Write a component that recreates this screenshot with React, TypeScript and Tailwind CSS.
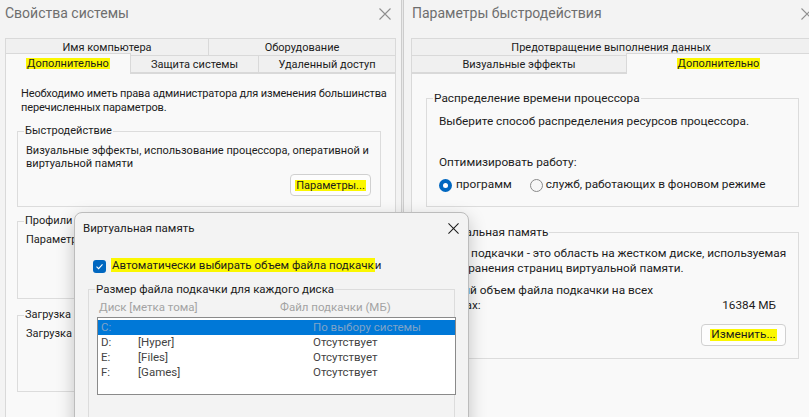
import React from "react";

// Three overlapping Windows dialogs: System Properties, Performance Options, Virtual Memory

type Kids = { children?: React.ReactNode; className?: string };

function CloseX({ className = "" }: { className?: string }) {
  return (
    <svg width="12" height="12" viewBox="0 0 12 12" className={className}>
      <path d="M0.5 0.5L11.5 11.5M11.5 0.5L0.5 11.5" stroke="currentColor" strokeWidth="1.1" />
    </svg>
  );
}

function Mark({ children }: Kids) {
  return <span className="bg-[#fbf700] px-[1px]">{children}</span>;
}

function Tab({ children, className = "" }: Kids) {
  return (
    <div
      className={`flex h-[18px] items-center justify-center border border-[#d9d9d9] bg-[#f0f0f0] text-[11px] leading-none ${className}`}
    >
      {children}
    </div>
  );
}

function ActiveTab({ children, className = "" }: Kids) {
  return (
    <div
      className={`relative z-10 -mb-px flex h-[21px] items-center justify-center border border-b-0 border-[#d9d9d9] bg-[#f9f9f9] pb-[2px] text-[11px] leading-none ${className}`}
    >
      {children}
    </div>
  );
}

function GroupBox({ label, className = "", children }: Kids & { label: React.ReactNode }) {
  return (
    <fieldset className={`min-w-0 border border-[#dcdcdc] ${className}`}>
      <legend className="ml-[6px] px-[1px] leading-[14px]">{label}</legend>
      {children}
    </fieldset>
  );
}

function Button({ children, className = "" }: Kids) {
  return (
    <div
      className={`flex h-[22px] items-center justify-center rounded-[4px] border border-[#d0d0d0] bg-[#fdfdfd] leading-none ${className}`}
    >
      {children}
    </div>
  );
}

function Radio({ checked }: { checked?: boolean }) {
  return checked ? (
    <span className="flex h-[13px] w-[13px] items-center justify-center rounded-full bg-[#0067c0]">
      <span className="h-[5px] w-[5px] rounded-full bg-white" />
    </span>
  ) : (
    <span className="h-[13px] w-[13px] rounded-full border border-[#8a8a8a] bg-[#f7f7f7]" />
  );
}

function SystemProperties() {
  return (
    <div className="absolute left-0 top-0 h-[440px] w-[402px] border-r border-[#cdcdcd] bg-[#f3f3f3] text-[11px]">
      <div className="flex h-[27px] items-center justify-between pl-[5px] pr-[10px]">
        <span className="text-[14px] text-[#6e6e6e]">Свойства системы</span>
        <CloseX className="text-[#8f8f8f]" />
      </div>

      <div className="ml-[5px] mt-[11px] w-[391px]">
        <div className="flex">
          <Tab className="w-[204px]">Имя компьютера</Tab>
          <Tab className="-ml-px flex-1">Оборудование</Tab>
        </div>
        <div className="-mt-px flex h-[18px] items-end">
          <ActiveTab className="w-[126px]">
            <Mark>Дополнительно</Mark>
          </ActiveTab>
          <Tab className="-ml-px w-[129px]">Защита системы</Tab>
          <Tab className="-ml-px flex-1">Удаленный доступ</Tab>
        </div>

        <div className="h-[400px] border border-[#d9d9d9] bg-[#f9f9f9] pt-[13px]">
          <p className="pl-[15px] leading-[14px] tracking-[-0.15px]">
            Необходимо иметь права администратора для изменения большинства
            <br />
            перечисленных параметров.
          </p>

          <GroupBox label="Быстродействие" className="ml-[11px] mt-[9px] w-[364px] pb-[10px]">
            <p className="pl-[8px] pt-[6px] leading-[13px]">
              Визуальные эффекты, использование процессора, оперативной и
              <br />
              виртуальной памяти
            </p>
            <div className="mt-[4px] flex justify-end pr-[9px]">
              <Button className="w-[81px]">
                <Mark>Параметры...</Mark>
              </Button>
            </div>
          </GroupBox>

          <GroupBox label="Профили пользователей" className="ml-[11px] mt-[7px] w-[364px]">
            <div className="h-[70px] pl-[8px] pt-[5px] leading-[14px]">
              Параметры рабочего стола, относящиеся ко входу в систему
            </div>
          </GroupBox>

          <GroupBox label="Загрузка и восстановление" className="ml-[11px] mt-[9px] w-[364px]">
            <div className="h-[69px] pl-[8px] pt-[5px] leading-[14px]">
              Загрузка и восстановление системы, отладочная информация
            </div>
          </GroupBox>
        </div>
      </div>
    </div>
  );
}

function PerformanceOptions() {
  return (
    <div className="absolute left-[403px] top-0 h-[440px] w-[420px] border-l border-[#cdcdcd] bg-[#f3f3f3] text-[11.8px]">
      <div className="flex h-[27px] items-center justify-between pl-[8px] pr-[10px]">
        <span className="text-[14px] text-[#6e6e6e]">Параметры быстродействия</span>
        <CloseX className="text-[#8f8f8f]" />
      </div>

      <div className="ml-[7px] mt-[11px] w-[400px]">
        <div className="flex">
          <Tab className="flex-1">Предотвращение выполнения данных</Tab>
        </div>
        <div className="-mt-px flex h-[18px] items-end">
          <Tab className="w-[216px]">Визуальные эффекты</Tab>
          <ActiveTab className="-ml-px flex-1">
            <Mark>Дополнительно</Mark>
          </ActiveTab>
        </div>

        <div className="h-[400px] border border-[#d9d9d9] bg-[#f9f9f9] pt-[17px]">
          <GroupBox
            label="Распределение времени процессора"
            className="ml-[14px] w-[373px] pb-[14px]"
          >
            <p className="mt-[9px] pl-[12px] leading-[14px]">
              Выберите способ распределения ресурсов процессора.
            </p>
            <p className="mt-[27px] pl-[12px] leading-[14px]">Оптимизировать работу:</p>
            <div className="mt-[9px] flex h-[14px] items-center pl-[12px]">
              <Radio checked />
              <span className="ml-[4px]">программ</span>
              <span className="ml-[18px]" />
              <Radio />
              <span className="ml-[3px]">служб, работающих в фоновом режиме</span>
            </div>
          </GroupBox>

          <GroupBox label="Виртуальная память" className="ml-[14px] mt-[18px] w-[373px] pb-[12px]">
            <div className="pl-[12px] leading-[15px]">
              <p className="mt-[7px]">
                Файл подкачки - это область на жестком диске, используемая
                <br />
                для хранения страниц виртуальной памяти.
              </p>
              <p className="mt-[7px]">Общий объем файла подкачки на всех</p>
              <div className="flex justify-between pr-[22px]">
                <span>дисках:</span>
                <span>16384 МБ</span>
              </div>
            </div>
            <div className="mt-[11px] flex justify-end pr-[12px]">
              <Button className="w-[85px]">
                <Mark>Изменить...</Mark>
              </Button>
            </div>
          </GroupBox>
        </div>
      </div>
    </div>
  );
}

const drives = [
  { disk: "D:", label: "[Hyper]", size: "Отсутствует" },
  { disk: "E:", label: "[Files]", size: "Отсутствует" },
  { disk: "F:", label: "[Games]", size: "Отсутствует" },
];

function VirtualMemory() {
  return (
    <div className="absolute left-[74px] top-[212px] h-[230px] w-[395px] rounded-t-[8px] border border-[#bcbcbc] bg-[#f3f3f3] text-[11.5px] shadow-[0_6px_18px_rgba(0,0,0,0.22)]">
      <div className="flex h-[31px] items-center justify-between pl-[8px] pr-[9px]">
        <span>Виртуальная память</span>
        <CloseX className="h-[11px] w-[11px] text-[#1a1a1a]" />
      </div>

      <div className="mt-[15px] flex h-[14px] items-center pl-[18px]">
        <span className="flex h-[13px] w-[13px] items-center justify-center rounded-[3px] bg-[#0067c0]">
          <svg width="9" height="9" viewBox="0 0 9 9">
            <path d="M1.5 4.6L3.6 6.6L7.5 2.4" stroke="white" strokeWidth="1.1" fill="none" />
          </svg>
        </span>
        <span className="ml-[5px]">
          <Mark>Автоматически выбирать объем файла подкачк</Mark>и
        </span>
      </div>

      <GroupBox
        label="Размер файла подкачки для каждого диска"
        className="ml-[13px] mt-[9px] h-[200px] w-[367px]"
      >
        <div className="mt-[4px] flex pl-[10px] leading-[14px] text-[#a3a3a3]">
          <span className="w-[181px]">Диск [метка тома]</span>
          <span>Файл подкачки (МБ)</span>
        </div>
        <div className="ml-[8px] mt-[3px] h-[78px] w-[359px] border border-[#8a8a8a] bg-white pt-[2px] leading-[15px]">
          <div className="flex h-[15px] items-center bg-[#0078d7] pl-[3px] text-[#7fa3c8]">
            <span className="w-[37px]">C:</span>
            <span className="w-[175px]" />
            <span>По выбору системы</span>
          </div>
          {drives.map((d) => (
            <div key={d.disk} className="flex h-[15px] items-center pl-[3px] text-[#444444]">
              <span className="w-[37px]">{d.disk}</span>
              <span className="w-[175px]">{d.label}</span>
              <span>{d.size}</span>
            </div>
          ))}
        </div>
      </GroupBox>
    </div>
  );
}

export default function App() {
  return (
    <div className="relative h-[417px] w-[809px] overflow-hidden whitespace-nowrap bg-[#e9e9e9] font-['Roboto',sans-serif] text-[12px] text-[#1c1c1c]">
      <SystemProperties />
      <PerformanceOptions />
      <VirtualMemory />
    </div>
  );
}
